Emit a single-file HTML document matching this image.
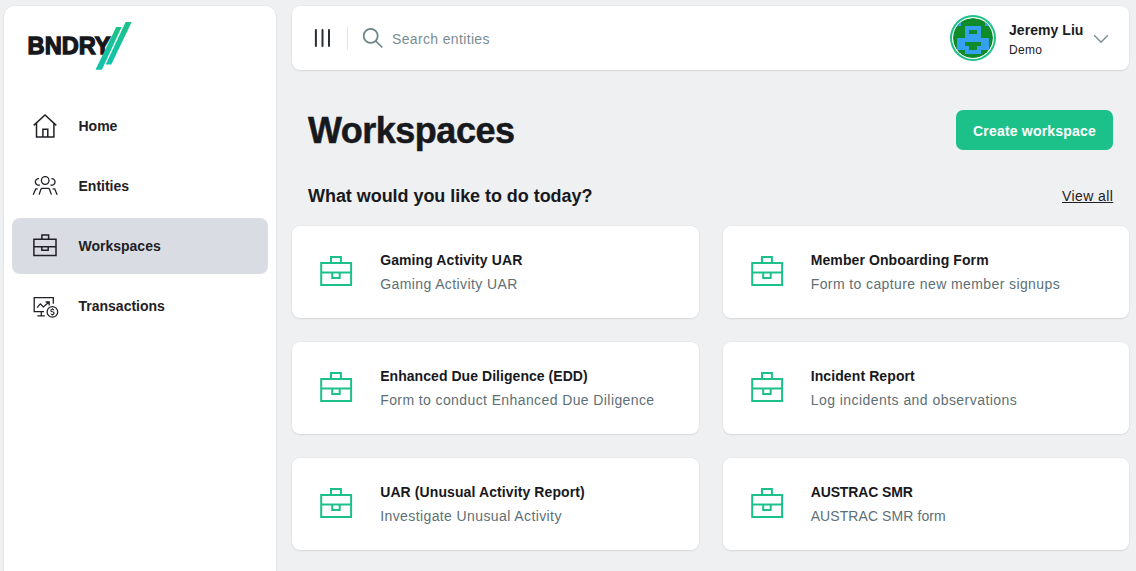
<!DOCTYPE html>
<html><head><meta charset="utf-8">
<style>
*{box-sizing:border-box;margin:0;padding:0}
html,body{width:1136px;height:571px;overflow:hidden;background:#eff0f2;font-family:"Liberation Sans",sans-serif;color:#1b1d21}
.sidebar{position:absolute;left:4px;top:6px;width:272px;height:600px;background:#fff;border-radius:10px;box-shadow:0 0 0 0.5px rgba(0,0,0,0.06),0 1px 2px rgba(0,0,0,0.05)}
.logo{position:absolute;left:0;top:0}
.nav{position:absolute;left:8px;top:92px;width:256px}
.nav .item{position:relative;height:56px;margin-bottom:4px;border-radius:8px}
.nav .item.active{background:#d9dde3}
.nav .item svg{position:absolute;left:20px;top:16px;overflow:visible}
.nav .item span{position:absolute;left:66.5px;top:0;line-height:56px;font-size:14px;font-weight:bold;color:#1f2125}
.header{position:absolute;left:292px;top:6px;width:837px;height:64px;background:#fff;border-radius:8px;box-shadow:0 0 0 0.5px rgba(0,0,0,0.05),0 1px 2px rgba(0,0,0,0.08)}
.title{position:absolute;left:308px;top:109px;font-size:36px;font-weight:bold;line-height:44px;color:#18191d;letter-spacing:-0.5px;-webkit-text-stroke:0.5px #18191d}
.btn{position:absolute;left:956px;top:110px;width:157px;height:40px;background:#1cc18a;border-radius:7px;color:#fff;font-size:14px;font-weight:bold;text-align:center;line-height:42px;letter-spacing:0.2px}
.sub{position:absolute;left:308px;top:184px;font-size:18px;font-weight:bold;line-height:24px;color:#18191d;letter-spacing:-0.05px}
.viewall{position:absolute;left:1062px;top:186px;font-size:14px;line-height:20px;text-decoration:underline;color:#1f2125;letter-spacing:0.4px}
.card{position:absolute;width:406.5px;height:92px;background:#fff;border-radius:8px;box-shadow:0 0 0 0.5px rgba(0,0,0,0.05),0 1px 2px rgba(0,0,0,0.08)}
.card svg{position:absolute;left:28px;top:29px}
.card .t{position:absolute;left:88.2px;top:24px;font-size:14px;font-weight:bold;line-height:20px;color:#18191d;letter-spacing:0.1px;white-space:nowrap}
.card .d{position:absolute;left:88.2px;top:48px;font-size:14px;line-height:20px;color:#5e6f75;letter-spacing:0.4px;white-space:nowrap}
.ph{position:absolute;left:392px;top:28.7px;font-size:14px;line-height:20px;color:#7a8c93;letter-spacing:0.35px}
.uname{position:absolute;left:1009px;top:20px;font-size:14px;font-weight:bold;line-height:20px;color:#1a1c20;letter-spacing:0.05px}
.urole{position:absolute;left:1009px;top:42px;font-size:12px;line-height:16px;color:#1f2125;letter-spacing:0.3px}
</style></head><body>
<div class="sidebar"></div>
<svg class="logo" width="140" height="80" viewBox="0 0 140 80" style="position:absolute;left:0;top:0">
  <defs><linearGradient id="lg" x1="0" y1="0" x2="0" y2="1"><stop offset="0" stop-color="#1cc286"/><stop offset="1" stop-color="#12c3ae"/></linearGradient></defs>
  <text x="27.6" y="54.4" font-family="Liberation Sans" font-weight="bold" font-size="24.2" fill="#17181b" stroke="#17181b" stroke-width="1.3" textLength="83" lengthAdjust="spacingAndGlyphs">BNDRY</text>
  <polygon points="116.2,27.1 121.6,27.1 101.9,69.8 95.5,69.8" fill="url(#lg)"/>
  <polygon points="125.6,21.9 131.7,21.9 111.3,64.4 105.7,64.4" fill="url(#lg)"/>
</svg>
<div class="nav" style="left:12px;top:98px">
  <div class="item"><svg width="24" height="24" viewBox="0 0 24 24" fill="none" stroke="#1f2125" stroke-width="1.5"><path d="M1.7 11.4L13 1.0L24.3 11.4M4.5 9.3V23.1H21.9V9.3M10.9 23.1V15.2H15.8V23.1"/></svg><span>Home</span></div>
  <div class="item"><svg width="24" height="24" viewBox="0 0 24 24" fill="none" stroke="#1f2125" stroke-width="1.3"><circle cx="13.2" cy="6.5" r="3.8"/><path d="M7.0 4.7A3.25 3.25 0 1 0 7.9 10.9M19.4 4.7A3.25 3.25 0 1 1 18.5 10.9"/><path d="M7.1 20.6L8.9 15.3Q9.3 14.3 10.3 14.3H16.2Q17.2 14.3 17.5 15.3L19.4 20.6M5.8 14.8H3.8L1.2 20.8M20.6 14.8H22.7L25.1 20.8"/></svg><span>Entities</span></div>
  <div class="item active"><svg width="24" height="24" viewBox="0 0 24 24" fill="none" stroke="#1f2125" stroke-width="1.5"><path d="M1.9 5.3H24V21.6H1.9ZM1.9 12.8H24M9.9 1H16.6V5.3H9.9ZM9.8 12.8H16.2V16.2H9.8Z"/></svg><span>Workspaces</span></div>
  <div class="item"><svg width="24" height="24" viewBox="0 0 24 24" fill="none" stroke="#1f2125" stroke-width="1.3"><path d="M21.3 9.8V3.6H2.2V17.7H12M9.3 17.7V21.8M5.4 21.8H12.8M5.1 13.6L8.3 9.9L11.4 12.9L17 8M13.6 8H17.2V11.4"/><circle cx="20.4" cy="17.9" r="5.3"/><path d="M21.9 16.2Q21.5 15.3 20.4 15.3Q18.8 15.3 18.8 16.5Q18.8 17.6 20.4 17.8Q22.1 18 22.1 19.2Q22.1 20.5 20.4 20.5Q19.2 20.5 18.8 19.6M20.4 14.3V15.3M20.4 20.5V21.5" stroke-width="1.1"/></svg><span>Transactions</span></div>
</div>
<div class="header"></div>
<svg width="24" height="24" style="position:absolute;left:310px;top:26px" viewBox="0 0 24 24" fill="none" stroke="#2b2f34" stroke-width="2" stroke-linecap="round"><path d="M5.9 4V20M12.5 4V20M19 4V20"/></svg>
<div style="position:absolute;left:347px;top:26px;width:1px;height:24px;background:#e3e6e9"></div>
<svg width="24" height="24" style="position:absolute;left:360px;top:26px" viewBox="0 0 24 24" fill="none" stroke="#6c8389" stroke-width="1.75"><circle cx="10.7" cy="9.9" r="7"/><path d="M15.7 15L21.8 21" stroke-linecap="round"/></svg>
<div class="ph">Search entities</div>
<div style="position:absolute;left:950px;top:15px;width:46px;height:46px;border-radius:50%;background:#1cc18a"></div>
<div style="position:absolute;left:952px;top:17px;width:42px;height:42px;border-radius:50%;background:#fff"></div>
<svg width="40" height="40" viewBox="0 0 10 10" shape-rendering="crispEdges" style="position:absolute;left:953px;top:18px;border-radius:50%;overflow:hidden;clip-path:circle(20px at 20px 20px)">
  <rect x="0" y="0" width="10" height="10" fill="#0f8b2a"/>
  <g fill="#35a0f0">
    <rect x="0" y="0" width="2" height="2"/><rect x="8" y="0" width="2" height="2"/>
    <rect x="3" y="2" width="4" height="1"/><rect x="3" y="3" width="1" height="1"/><rect x="6" y="3" width="1" height="1"/>
    <rect x="3" y="4" width="4" height="1"/>
    <rect x="1" y="5" width="8" height="1"/>
    <rect x="1" y="6" width="2" height="1"/><rect x="7" y="6" width="2" height="1"/>
    <rect x="1" y="7" width="3" height="1"/><rect x="6" y="7" width="3" height="1"/>
    <rect x="3" y="8" width="4" height="1"/>
  </g>
</svg>
<div class="uname">Jeremy Liu</div>
<div class="urole">Demo</div>
<svg width="16" height="10" style="position:absolute;left:1093px;top:34px" viewBox="0 0 16 10" fill="none" stroke="#7b8f96" stroke-width="1.5"><path d="M1.2 1.2L8 8.2L14.8 1.2"/></svg>
<div class="title">Workspaces</div>
<div class="btn">Create workspace</div>
<div class="sub">What would you like to do today?</div>
<div class="viewall">View all</div>
<div class="card" style="left:292px;top:226px"><svg width="34" height="34" viewBox="0 0 34 34" fill="none" stroke="#1cc18a" stroke-width="2"><path d="M1.2 8H31.1V30H1.2ZM1.2 17.5H31.1M11 1.9H20.9V8H11ZM12.2 17.5H19.7V23.1H12.2Z"/></svg><span class="t">Gaming Activity UAR</span><span class="d">Gaming Activity UAR</span></div>
<div class="card" style="left:722.5px;top:226px"><svg width="34" height="34" viewBox="0 0 34 34" fill="none" stroke="#1cc18a" stroke-width="2"><path d="M1.2 8H31.1V30H1.2ZM1.2 17.5H31.1M11 1.9H20.9V8H11ZM12.2 17.5H19.7V23.1H12.2Z"/></svg><span class="t">Member Onboarding Form</span><span class="d">Form to capture new member signups</span></div>
<div class="card" style="left:292px;top:342px"><svg width="34" height="34" viewBox="0 0 34 34" fill="none" stroke="#1cc18a" stroke-width="2"><path d="M1.2 8H31.1V30H1.2ZM1.2 17.5H31.1M11 1.9H20.9V8H11ZM12.2 17.5H19.7V23.1H12.2Z"/></svg><span class="t" style="letter-spacing:0.05px">Enhanced Due Diligence (EDD)</span><span class="d">Form to conduct Enhanced Due Diligence</span></div>
<div class="card" style="left:722.5px;top:342px"><svg width="34" height="34" viewBox="0 0 34 34" fill="none" stroke="#1cc18a" stroke-width="2"><path d="M1.2 8H31.1V30H1.2ZM1.2 17.5H31.1M11 1.9H20.9V8H11ZM12.2 17.5H19.7V23.1H12.2Z"/></svg><span class="t">Incident Report</span><span class="d" style="letter-spacing:0.45px">Log incidents and observations</span></div>
<div class="card" style="left:292px;top:458px"><svg width="34" height="34" viewBox="0 0 34 34" fill="none" stroke="#1cc18a" stroke-width="2"><path d="M1.2 8H31.1V30H1.2ZM1.2 17.5H31.1M11 1.9H20.9V8H11ZM12.2 17.5H19.7V23.1H12.2Z"/></svg><span class="t" style="letter-spacing:0.1px">UAR (Unusual Activity Report)</span><span class="d">Investigate Unusual Activity</span></div>
<div class="card" style="left:722.5px;top:458px"><svg width="34" height="34" viewBox="0 0 34 34" fill="none" stroke="#1cc18a" stroke-width="2"><path d="M1.2 8H31.1V30H1.2ZM1.2 17.5H31.1M11 1.9H20.9V8H11ZM12.2 17.5H19.7V23.1H12.2Z"/></svg><span class="t" style="letter-spacing:-0.13px">AUSTRAC SMR</span><span class="d" style="letter-spacing:0.08px">AUSTRAC SMR form</span></div>
</body></html>
